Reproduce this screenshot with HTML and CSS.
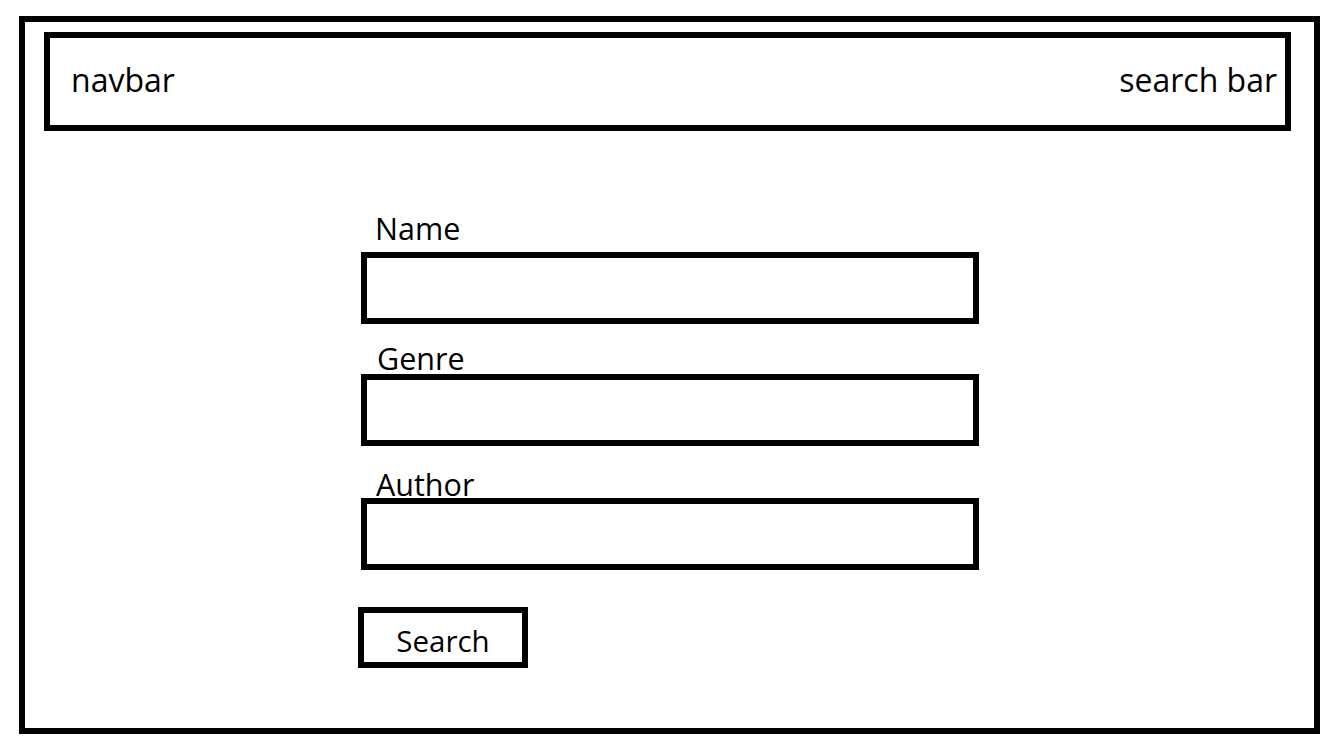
FILE: index.html
```html
<!DOCTYPE html>
<html lang="en">
<head>
<meta charset="utf-8">
<title>Search wireframe</title>
<link rel="stylesheet" href="styles.css">
</head>
<body>
<div class="frame">
  <header class="navbar">
    <span class="nav-left">navbar</span>
    <span class="nav-right">search bar</span>
  </header>
  <form class="form">
    <div class="field field-name">
      <label class="label">Name</label>
      <div class="input"></div>
    </div>
    <div class="field field-genre">
      <label class="label">Genre</label>
      <div class="input"></div>
    </div>
    <div class="field field-author">
      <label class="label">Author</label>
      <div class="input"></div>
    </div>
    <div class="button">Search</div>
  </form>
</div>
</body>
</html>
```
FILE: styles.css
```css
* { box-sizing: border-box; }
html, body { margin: 0; padding: 0; background: #fff; }
body {
  font-family: "Open Sans", "Noto Sans", sans-serif;
  color: #000;
  width: 1334px;
  height: 747px;
  overflow: hidden;
}
.frame {
  margin: 16px 0 0 19px;
  width: 1301px;
  height: 718px;
  border: 6px solid #000;
  padding: 10px 23px 0 19px;
}
.navbar {
  height: 99px;
  border: 6px solid #000;
  display: flex;
  justify-content: space-between;
  align-items: center;
  padding: 0 8px 4px 21px;
  font-size: 32px;
  line-height: 30px;
}
.form {
  margin: 82px 0 0 317px;
  width: 618px;
  display: flex;
  flex-direction: column;
}
.field { display: flex; flex-direction: column; }
.label {
  display: block;
  font-size: 30.5px;
  line-height: 30px;
  height: 30px;
  padding-left: 14px;
}
.input {
  height: 72px;
  border: 6px solid #000;
}
.field-name .label { margin-bottom: 9px; }
.field-genre { margin-top: 19px; }
.field-genre .label { margin-bottom: 1px; padding-left: 16px; }
.field-author { margin-top: 23px; }
.field-author .label { margin-bottom: -1px; padding-left: 15px; }
.button {
  margin: 37px 0 0 -3px;
  width: 170px;
  height: 61px;
  border: 6px solid #000;
  font-size: 29.5px;
  line-height: 30px;
  display: flex;
  align-items: center;
  justify-content: center;
  padding-top: 6px;
}
```
